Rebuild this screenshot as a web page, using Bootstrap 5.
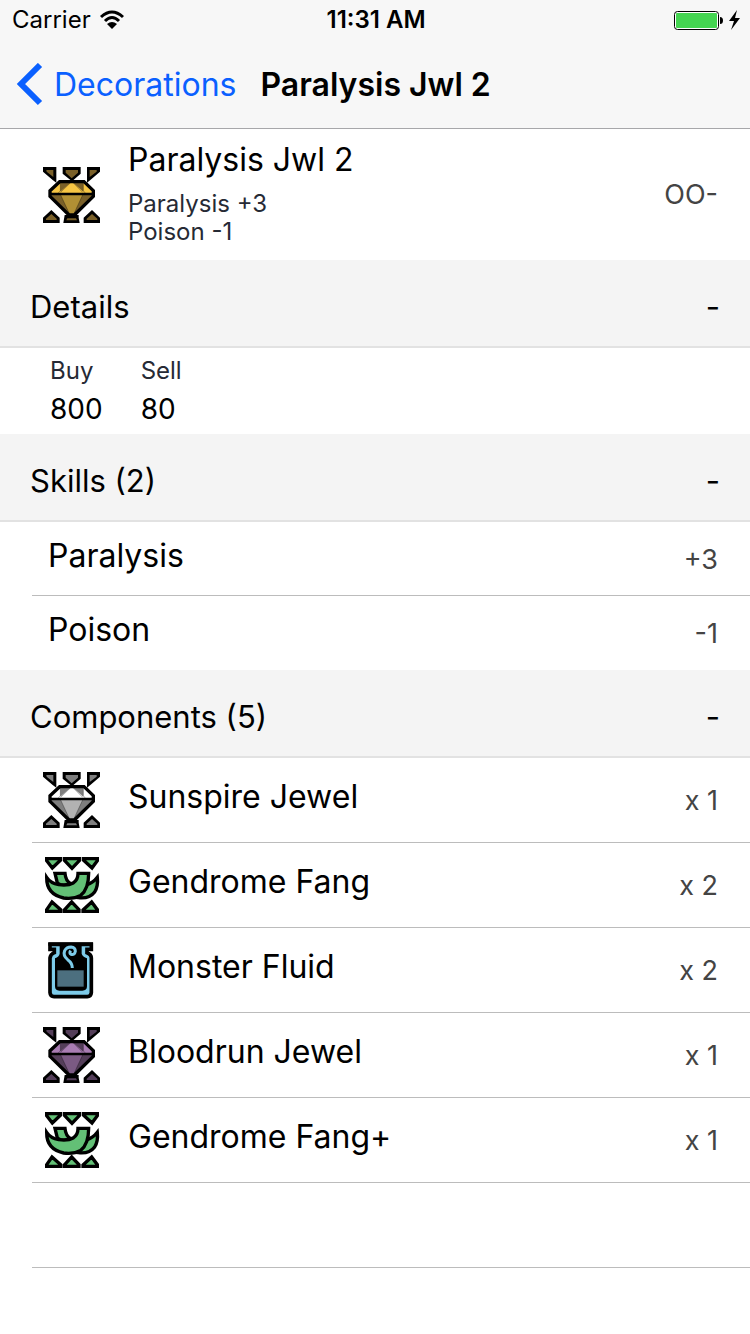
<!DOCTYPE html>
<html lang="en">
<head>
<meta charset="utf-8">
<meta name="viewport" content="width=device-width, initial-scale=1">
<title>Paralysis Jwl 2</title>
<link href="https://cdn.jsdelivr.net/npm/bootstrap@5.3.0/dist/css/bootstrap.min.css" rel="stylesheet">
<style>
  body { font-family: Inter, "Liberation Sans", sans-serif; color: #000; background: #fff; }
  .top-area { background: #f7f7f7; border-bottom: 1px solid #a7a7aa; }
  .status-row { height: 40px; font-size: 24px; line-height: 40px; padding: 0 10px 0 12px; }
  .title-row { height: 88px; font-size: 32px; line-height: 88px; padding: 2px 16px 0; }
  .back-link { color: #0a60ff; }
  .page-title { font-size: 32px; line-height: 88px; font-weight: 600; }
  .item-title { font-size: 32px; line-height: 44px; font-weight: 400; }
  .item-note { font-size: 24px; line-height: 28px; color: #262a35; }
  .item-value { font-size: 27px; line-height: 36px; color: #444; }
  .summary { height: 131px; padding: 0 32px 0 42px; }
  .summary-text { padding-bottom: 6px; }
  .section-toggle { height: 88px; padding: 8px 30px 0; font-size: 31px; line-height: 40px; color: #000;
    background: #f4f4f4; border: 0; border-bottom: 2px solid #e2e2e2; text-align: left; }
  .price-list { height: 86px; padding: 9px 50px; gap: 38px; }
  .price { font-size: 28px; line-height: 48px; }
  .row-line { border-bottom: 1px solid #bcbcbc; margin-left: 32px; padding-right: 32px; color: #000; }
  .row-line .item-title { padding-bottom: 6px; }
  .row-line .item-value { padding-top: 2px; }
  .skill-line { height: 74px; padding-left: 16px; }
  .skill-line:last-child { border-bottom-color: transparent; }
  .part-line { height: 85px; padding-left: 10px; }
  .item-icon { width: 60px; height: 60px; margin-right: 26px; flex: none; }
  .gem-gold { --hi: #f6c544; --mid: #b29034; --lo: #7a6029; }
  .gem-silver { --hi: #fff; --mid: #b2b2b2; --lo: #7e7e7e; }
  .gem-purple { --hi: #a87cb2; --mid: #7b5a83; --lo: #543e59; }
</style>
</head>
<body>
<svg width="0" height="0" class="position-absolute" aria-hidden="true">
  <symbol id="gem" viewBox="36 30 180 180">
    <path d="M39 36H79V83L68 75 39 50ZM98 36H152V56L126 79 98 56ZM171 36H210V50L181 75 171 83ZM39 204V188L64 165 89 188V204ZM104 180H146V188L149 204H100ZM161 204V188L186 165 210 188V204Z"/>
    <path d="M49 45H70V66L50 50ZM107 45H144V53L125 70 107 53ZM179 45H200V50L179 66ZM48 195V191L64 177 80 191V195ZM112 190H138L141 196H109ZM170 195V191L186 177 202 191V195Z" fill="var(--lo)"/>
    <path d="M89 80H162L190 107V124L133 180H117L60 124V107Z" fill="var(--hi)"/>
    <path d="M91 82H123L91 110ZM128 82H160V110ZM62 118H189V123L132 180H118L62 123Z" fill="var(--lo)"/>
    <path d="M92 120H158L130 180H120Z" fill="var(--mid)"/>
    <path d="M91 82V107L82 117M125 80 92 112M126 80 158 112M160 82V107L168 117M92 120 120 180M158 120 130 180" fill="none" stroke="#000" stroke-opacity=".45" stroke-width="2"/>
    <path d="M60 117H190" stroke="#000" stroke-width="8"/>
    <path d="M89 80H162L190 107V124L133 180H117L60 124V107Z" fill="none" stroke="#000" stroke-width="10"/>
  </symbol>
  <symbol id="fang" viewBox="36 30 180 180">
    <g fill="#63c076" stroke="#000" stroke-width="10">
      <path d="M50 41H92V45L67 69 50 47ZM104 41H148V47L126 70 104 47ZM160 41H202V47L186 69 160 45ZM50 199V194L66 171 93 195V199ZM104 199V194L125 171 147 194V199ZM159 199V195L185 171 202 194V199Z"/>
      <path d="M75 85H105Q107 108 122 116Q100 128 82 114Z"/>
      <path d="M202 97Q190 113 170 120L145 158Q178 162 194 141Q205 123 202 97Z"/>
      <path d="M50 97Q62 115 86 119Q144 126 144 85H176Q176 133 152 151Q131 163 101 159Q49 148 50 97Z"/>
    </g>
  </symbol>
  <symbol id="jar" viewBox="36 30 180 180">
    <path d="M60 43H184V58H171V68Q184 73 184 84V188Q183 200 172 200H72Q61 200 60 188V84Q61 73 73 68V58H60Z" fill="#7dcbe9" stroke="#000" stroke-width="11"/>
    <path d="M89 44V71Q87 80 75 85V169Q75 182 88 182H157Q171 182 171 169V85Q158 80 155 71V44Z"/>
    <path d="M55 37H189V47H55Z"/>
    <path d="M82 121H161V170H82Z" fill="#4c6f7f"/>
    <path d="M127 114Q127 99 113 89Q98 77 104 62Q110 51 123 51Q136 52 136 64Q134 76 123 73Q117 69 122 62" fill="none" stroke="#7dcbe9" stroke-width="9"/>
  </symbol>
</svg>

<header class="top-area">
  <div class="status-row row g-0">
    <div class="col d-flex align-items-center gap-2">Carrier
      <svg width="26" height="20" viewBox="0 0 26 20" aria-label="Wi-Fi"><g fill="none" stroke="#000" stroke-width="3"><path d="M2 7Q13-3 24 7M6 11Q13 4 20 11"/></g><path d="M8 14Q13 10 18 14L13 19Z"/></svg>
    </div>
    <div class="col-auto fw-semibold">11:31 AM</div>
    <div class="col d-flex align-items-center justify-content-end">
      <svg width="66" height="20" viewBox="0 0 66 20" aria-label="Battery charging"><rect x=".5" y="1.5" width="44" height="18" rx="3" fill="#fff" stroke="#000"/><rect x="2" y="3" width="41" height="15" rx="1" fill="#44d551"/><path d="M46 7Q49 7 49 10.500Q49 14 46 14ZM63 0 55 11H60L57 20 66 8H61Z"/></svg>
    </div>
  </div>
  <nav class="title-row d-flex align-items-center">
    <a href="#" class="back-link text-decoration-none d-flex align-items-center">
      <svg class="me-2" width="30" height="44" viewBox="0 0 30 44" aria-hidden="true"><path d="M24 2 5 21 24 40" fill="none" stroke="currentColor" stroke-width="6"/></svg>Decorations</a>
    <h1 class="page-title mb-0 ms-4">Paralysis Jwl 2</h1>
  </nav>
</header>

<main>
  <section class="summary d-flex align-items-center">
    <svg class="item-icon gem-gold" aria-hidden="true"><use href="#gem"/></svg>
    <div class="summary-text flex-grow-1">
      <h2 class="item-title mb-2">Paralysis Jwl 2</h2>
      <div class="item-note">Paralysis +3</div>
      <div class="item-note">Poison -1</div>
    </div>
    <span class="item-value">OO-</span>
  </section>

  <section>
    <button type="button" class="section-toggle d-flex w-100 justify-content-between align-items-center" data-bs-toggle="collapse" data-bs-target="#details"><span>Details</span><span>-</span></button>
    <div id="details" class="collapse show">
      <dl class="price-list d-flex mb-0">
        <div><dt class="item-note fw-normal">Buy</dt><dd class="price mb-0">800</dd></div>
        <div><dt class="item-note fw-normal">Sell</dt><dd class="price mb-0">80</dd></div>
      </dl>
    </div>
  </section>

  <section>
    <button type="button" class="section-toggle d-flex w-100 justify-content-between align-items-center" data-bs-toggle="collapse" data-bs-target="#skills"><span>Skills (2)</span><span>-</span></button>
    <div id="skills" class="collapse show">
      <a href="#" class="row-line skill-line d-flex align-items-center text-decoration-none"><span class="item-title flex-grow-1">Paralysis</span><span class="item-value">+3</span></a>
      <a href="#" class="row-line skill-line d-flex align-items-center text-decoration-none"><span class="item-title flex-grow-1">Poison</span><span class="item-value">-1</span></a>
    </div>
  </section>

  <section>
    <button type="button" class="section-toggle d-flex w-100 justify-content-between align-items-center" data-bs-toggle="collapse" data-bs-target="#components"><span>Components (5)</span><span>-</span></button>
    <div id="components" class="collapse show">
      <a href="#" class="row-line part-line d-flex align-items-center text-decoration-none"><svg class="item-icon gem-silver" aria-hidden="true"><use href="#gem"/></svg><span class="item-title flex-grow-1">Sunspire Jewel</span><span class="item-value">x 1</span></a>
      <a href="#" class="row-line part-line d-flex align-items-center text-decoration-none"><svg class="item-icon" aria-hidden="true"><use href="#fang"/></svg><span class="item-title flex-grow-1">Gendrome Fang</span><span class="item-value">x 2</span></a>
      <a href="#" class="row-line part-line d-flex align-items-center text-decoration-none"><svg class="item-icon" aria-hidden="true"><use href="#jar"/></svg><span class="item-title flex-grow-1">Monster Fluid</span><span class="item-value">x 2</span></a>
      <a href="#" class="row-line part-line d-flex align-items-center text-decoration-none"><svg class="item-icon gem-purple" aria-hidden="true"><use href="#gem"/></svg><span class="item-title flex-grow-1">Bloodrun Jewel</span><span class="item-value">x 1</span></a>
      <a href="#" class="row-line part-line d-flex align-items-center text-decoration-none"><svg class="item-icon" aria-hidden="true"><use href="#fang"/></svg><span class="item-title flex-grow-1">Gendrome Fang+</span><span class="item-value">x 1</span></a>
      <div class="row-line part-line"></div>
    </div>
  </section>
</main>
<script src="https://cdn.jsdelivr.net/npm/bootstrap@5.3.0/dist/js/bootstrap.bundle.min.js"></script>
</body>
</html>
